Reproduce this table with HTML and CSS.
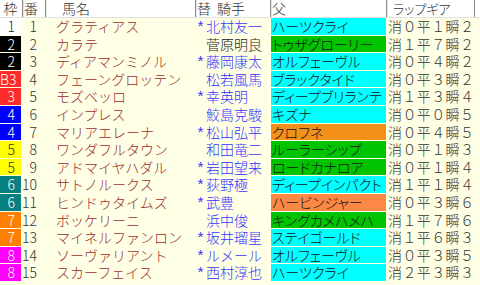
FILE: index.html
```html
<!DOCTYPE html>
<html lang="ja">
<head>
<meta charset="utf-8">
<title>ラップギア</title>
<link rel="stylesheet" href="styles.css">
</head>
<body>
<div class="table">
  <div class="row head">
    <div class="h h-waku">枠</div>
    <div class="h h-ban sep">番</div>
    <div class="h h-name sep">馬名</div>
    <div class="h h-jockey sep"><span>替</span><span class="kishu">騎手</span></div>
    <div class="h h-sire sep">父</div>
    <div class="h h-lap sep">ラップギア</div>
  </div>

  <div class="row"><div class="waku w1">1</div><div class="ban">1</div><div class="name">グラティアス</div><div class="jockey"><span class="mark">*</span>北村友一</div><div class="sire c-cyan">ハーツクライ</div><div class="lap">消０平１瞬２</div></div>
  <div class="row"><div class="waku w2">2</div><div class="ban">2</div><div class="name">カラテ</div><div class="jockey plain"><span class="mark"></span>菅原明良</div><div class="sire c-green">トゥザグローリー</div><div class="lap">消１平７瞬２</div></div>
  <div class="row"><div class="waku w2">2</div><div class="ban">3</div><div class="name">ディアマンミノル</div><div class="jockey"><span class="mark">*</span>藤岡康太</div><div class="sire c-cyan">オルフェーヴル</div><div class="lap">消０平４瞬２</div></div>
  <div class="row"><div class="waku w3">B3</div><div class="ban">4</div><div class="name">フェーングロッテン</div><div class="jockey"><span class="mark"></span>松若風馬</div><div class="sire c-cyan">ブラックタイド</div><div class="lap">消０平３瞬２</div></div>
  <div class="row"><div class="waku w3">3</div><div class="ban">5</div><div class="name">モズベッロ</div><div class="jockey"><span class="mark">*</span>幸英明</div><div class="sire c-cyan">ディープブリランテ</div><div class="lap">消１平３瞬４</div></div>
  <div class="row"><div class="waku w4">4</div><div class="ban">6</div><div class="name">インプレス</div><div class="jockey"><span class="mark"></span>鮫島克駿</div><div class="sire c-cyan">キズナ</div><div class="lap">消０平０瞬５</div></div>
  <div class="row"><div class="waku w4">4</div><div class="ban">7</div><div class="name">マリアエレーナ</div><div class="jockey"><span class="mark">*</span>松山弘平</div><div class="sire c-orange">クロフネ</div><div class="lap">消０平４瞬５</div></div>
  <div class="row"><div class="waku w5">5</div><div class="ban">8</div><div class="name">ワンダフルタウン</div><div class="jockey"><span class="mark"></span>和田竜二</div><div class="sire c-green">ルーラーシップ</div><div class="lap">消０平１瞬３</div></div>
  <div class="row"><div class="waku w5">5</div><div class="ban">9</div><div class="name">アドマイヤハダル</div><div class="jockey"><span class="mark">*</span>岩田望来</div><div class="sire c-green">ロードカナロア</div><div class="lap">消０平１瞬４</div></div>
  <div class="row"><div class="waku w6">6</div><div class="ban">10</div><div class="name">サトノルークス</div><div class="jockey"><span class="mark">*</span>荻野極</div><div class="sire c-cyan">ディープインパクト</div><div class="lap">消１平１瞬４</div></div>
  <div class="row"><div class="waku w6">6</div><div class="ban">11</div><div class="name">ヒンドゥタイムズ</div><div class="jockey"><span class="mark">*</span>武豊</div><div class="sire c-salmon">ハービンジャー</div><div class="lap">消０平３瞬６</div></div>
  <div class="row"><div class="waku w7">7</div><div class="ban">12</div><div class="name">ボッケリーニ</div><div class="jockey"><span class="mark"></span>浜中俊</div><div class="sire c-green">キングカメハメハ</div><div class="lap">消１平７瞬６</div></div>
  <div class="row"><div class="waku w7">7</div><div class="ban">13</div><div class="name">マイネルファンロン</div><div class="jockey"><span class="mark">*</span>坂井瑠星</div><div class="sire c-cyan">ステイゴールド</div><div class="lap">消１平６瞬３</div></div>
  <div class="row"><div class="waku w8">8</div><div class="ban">14</div><div class="name">ソーヴァリアント</div><div class="jockey"><span class="mark">*</span>ルメール</div><div class="sire c-cyan">オルフェーヴル</div><div class="lap">消０平３瞬５</div></div>
  <div class="row"><div class="waku w8">8</div><div class="ban">15</div><div class="name">スカーフェイス</div><div class="jockey"><span class="mark">*</span>西村淳也</div><div class="sire c-cyan">ハーツクライ</div><div class="lap">消２平３瞬３</div></div>
</div>
</body>
</html>
```

FILE: styles.css
```css
html, body {
  margin: 0;
  padding: 0;
  background: #ffffe6;
}
body {
  width: 480px;
  height: 285px;
  overflow: hidden;
  font-family: "Noto Sans CJK JP", "Noto Sans", sans-serif;
  font-size: 14px;
  font-weight: 300;
  color: #333;
}
.table {
  display: flex;
  flex-direction: column;
}
.row {
  display: grid;
  grid-template-columns: 22px 23px 150px 75px 116px 94px;
  height: 17.6px;
  line-height: 16.6px;
  white-space: nowrap;
}
.row > div {
  overflow: hidden;
}
.head {
  height: 17px;
  line-height: 17px;
  background: #fff;
  border-bottom: 1px solid #e2e2dc;
  color: #333;
}
.sep {
  border-left: 1px solid #8a8a8a;
  box-shadow: inset 1px 0 0 #e6e6e6;
}
.h-waku { text-align: center; padding-right: 1px; }
.h-ban { padding-left: 1px; }
.h-name { padding-left: 16px; }
.h-jockey { padding-left: 1px; }
.h-jockey .kishu { margin-left: 6px; }
.h-sire { padding-left: 1px; }
.h-lap {
  padding-left: 6px;
  margin-right: 5px;
  border-right: 1px solid #8a8a8a;
  font-size: 13px;
  font-feature-settings: "palt";
}

.waku {
  text-align: right;
  padding-right: 6px;
  color: #fff;
  border-right: 1px solid #ffffe6;
  border-bottom: 1px solid #ffffe6;
}
.w1 { background: #fff; color: #222; }
.w2 { background: #000; }
.w3 { background: #ff2a2a; }
.w4 { background: #0000ff; }
.w5 { background: #ffff00; color: #333; }
.w6 { background: #088080; }
.w7 { background: #ff8000; }
.w8 { background: #ff00ff; }

.ban {
  text-align: right;
  padding-right: 8px;
  color: #333;
}
.name {
  padding-left: 11px;
  color: #9a2d2d;
}
.jockey {
  display: flex;
  color: #3333ff;
}
.jockey.plain { color: #222; }
.mark {
  display: inline-block;
  width: 10px;
  padding-left: 1px;
  padding-top: 3px;
  font-family: "Liberation Mono", monospace;
  font-size: 15px;
  font-weight: 400;
}
.sire {
  margin-left: 1px;
  padding-left: 1px;
  color: #111;
  border-bottom: 1px solid #ffffe6;
  font-feature-settings: "palt";
}
.c-cyan { background: #00ffff; }
.c-green { background: #00c400; }
.c-orange { background: #f39018; }
.c-salmon { background: #fb8844; }
.lap {
  padding-left: 2px;
  letter-spacing: 0.4px;
  color: #333;
}
```
